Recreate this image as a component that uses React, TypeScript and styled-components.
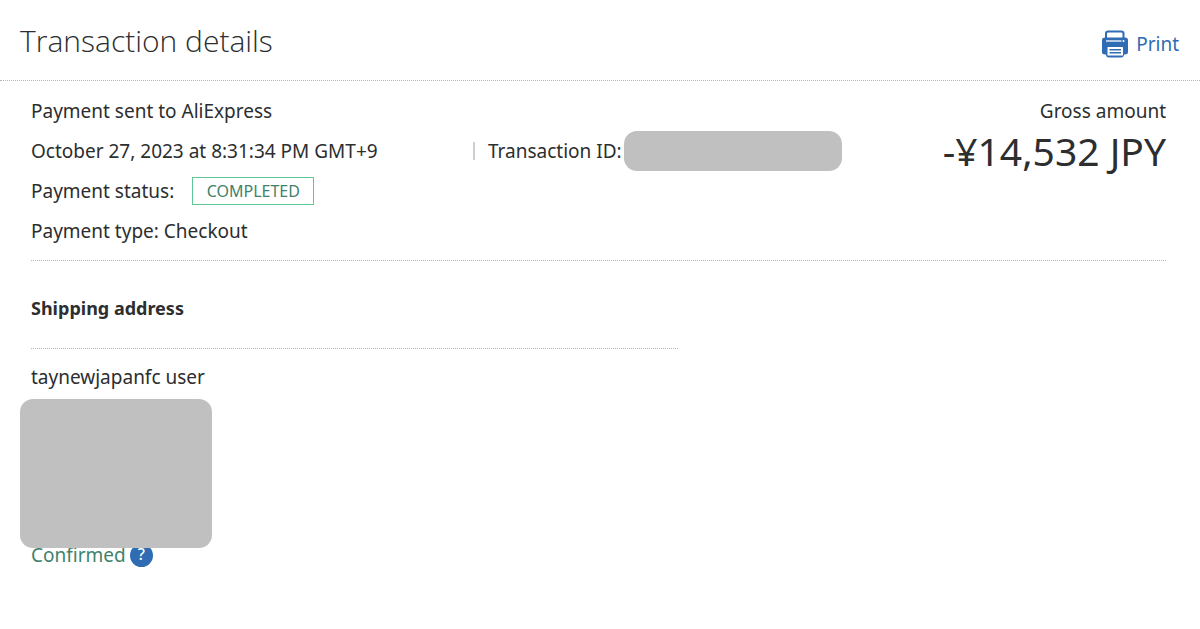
import React from "react";
import styled, { createGlobalStyle } from "styled-components";

const GlobalStyle = createGlobalStyle`
  * { box-sizing: border-box; }
  body {
    margin: 0;
    background: #fff;
    color: #2c2e2f;
    font-family: "Noto Sans", "Open Sans", sans-serif;
    font-size: 19px;
    line-height: 40px;
  }
`;

const Header = styled.header`
  display: flex;
  align-items: center;
  justify-content: space-between;
  height: 81px;
  padding: 0 21px 0 20px;
  border-bottom: 1px dotted #b4b4b4;
`;

const Title = styled.h1`
  margin: 0;
  padding-top: 2px;
  font-family: "Open Sans", "Noto Sans", sans-serif;
  font-size: 30px;
  font-weight: 300;
`;

const PrintButton = styled.button`
  display: flex;
  align-items: center;
  gap: 8px;
  padding: 8px 0 0;
  border: 0;
  background: none;
  color: #2f6cb3;
  font: inherit;
  line-height: 30px;
  cursor: pointer;
`;

const Content = styled.main`
  padding: 0 34px 0 31px;
`;

const Summary = styled.section`
  display: flex;
  justify-content: space-between;
  padding: 10px 0 9px;
  border-bottom: 1px dotted #b4b4b4;
`;

const Line = styled.div`
  display: flex;
  align-items: center;
  height: 40px;
  white-space: nowrap;
`;

const DateText = styled.time`
  width: 442px;
`;

const Divider = styled.span`
  width: 2px;
  height: 18px;
  margin-right: 13px;
  background: #cfcfcf;
`;

const Redacted = styled.span<{ $width: number; $height: number }>`
  display: block;
  width: ${(p) => p.$width}px;
  height: ${(p) => p.$height}px;
  border-radius: 13px;
  background: #c0c0c0;
`;

const IdLabel = styled.span`
  width: 136px;
`;

const Status = styled.span`
  display: flex;
  align-items: center;
  justify-content: center;
  width: 122px;
  height: 28px;
  margin-left: 18px;
  border: 1px solid #5fc794;
  color: #3f826b;
  font-size: 16px;
`;

const Amount = styled.div`
  text-align: right;
  white-space: nowrap;
`;

const Total = styled.div`
  font-size: 39px;
`;

const Shipping = styled.section`
  width: 57%;
`;

const SectionTitle = styled.h2`
  margin: 0 0 8px;
  padding: 27px 0 20px;
  border-bottom: 1px dotted #b4b4b4;
  font-size: 18px;
  line-height: 40px;
`;

const Address = styled.div`
  position: relative;
  z-index: 1;
  margin: 2px 0 0 -11px;
`;

const Confirmed = styled.div`
  display: flex;
  align-items: center;
  gap: 4px;
  height: 24px;
  margin-top: -5px;
  color: #3f826b;
`;

const HelpButton = styled.button`
  display: flex;
  align-items: center;
  justify-content: center;
  width: 23px;
  height: 23px;
  padding: 0 0 2px;
  border: 0;
  border-radius: 50%;
  background: #2f6cb3;
  color: #fff;
  font: 500 16px "Noto Sans", sans-serif;
  cursor: pointer;
`;

function PrinterIcon() {
  return (
    <svg width="26" height="28" viewBox="0 0 26 28" aria-hidden="true">
      <path d="M4 8V3.5Q4 1.5 6 1.5H19Q21.5 1.5 21.5 3.5V8" fill="#fff" stroke="#2f6cb3" strokeWidth="2" />
      <path d="M3 7.5H23Q26 7.5 26 10V22Q26 24.5 23 24.5H22Q22 27.5 19 27.5H7Q4 27.5 4 24.5H3Q0 24.5 0 22V10Q0 7.5 3 7.5Z" fill="#2f6cb3" />
      <path d="M4 11H19.5" stroke="#b5cbe5" strokeWidth="2" />
      <circle cx="21.5" cy="11" r="1" fill="#fff" />
      <rect x="5.5" y="17" width="15.5" height="8.5" rx="0.5" fill="#fff" />
      <path d="M7.5 19.8H19M7.5 22.8H19" stroke="#2f6cb3" strokeWidth="1.5" />
    </svg>
  );
}

export default function App() {
  return (
    <>
      <GlobalStyle />
      <Header>
        <Title>Transaction details</Title>
        <PrintButton type="button">
          <PrinterIcon />
          Print
        </PrintButton>
      </Header>
      <Content>
        <Summary>
          <div>
            <Line>Payment sent to AliExpress</Line>
            <Line>
              <DateText dateTime="2023-10-27T20:31:34+09:00">October 27, 2023 at 8:31:34 PM GMT+9</DateText>
              <Divider />
              <IdLabel>Transaction ID:</IdLabel>
              <Redacted $width={218} $height={40} />
            </Line>
            <Line>
              Payment status:
              <Status>COMPLETED</Status>
            </Line>
            <Line>Payment type: Checkout</Line>
          </div>
          <Amount>
            <div>Gross amount</div>
            <Total>-¥14,532 JPY</Total>
          </Amount>
        </Summary>
        <Shipping>
          <SectionTitle>Shipping address</SectionTitle>
          <div>taynewjapanfc user</div>
          <Address>
            <Redacted $width={192} $height={149} />
          </Address>
          <Confirmed>
            Confirmed
            <HelpButton type="button" aria-label="About confirmed addresses">?</HelpButton>
          </Confirmed>
        </Shipping>
      </Content>
    </>
  );
}
